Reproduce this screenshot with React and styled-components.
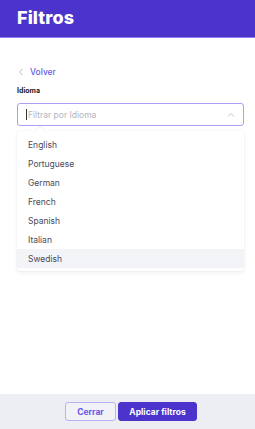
import React from "react";
import styled, { createGlobalStyle } from "styled-components";

const GlobalStyle = createGlobalStyle`
  html, body {
    margin: 0;
    padding: 0;
    font-family: Inter, "Noto Sans", sans-serif;
    background: #ffffff;
  }
  * { box-sizing: border-box; }
`;

const Page = styled.div`
  height: 429px;
  display: flex;
  flex-direction: column;
`;

const Header = styled.header`
  height: 38px;
  flex: 0 0 38px;
  background: #4b33cb;
  border-bottom: 1px solid #8d7ff0;
  display: flex;
  align-items: center;
  padding: 0 17px 2px;
  h1 {
    margin: 0;
    color: #ffffff;
    font-size: 18px;
    font-weight: 800;
    letter-spacing: 0.1px;
  }
`;

const Content = styled.main`
  flex: 1;
  padding: 28px 11px 0 17px;
  display: flex;
  flex-direction: column;
`;

const BackLink = styled.a`
  display: flex;
  align-items: center;
  gap: 6px;
  height: 12px;
  padding-left: 1px;
  color: #6a58e6;
  font-size: 8.5px;
  font-weight: 500;
  text-decoration: none;
`;

const Label = styled.div`
  margin-top: 8px;
  font-size: 7px;
  font-weight: 700;
  color: #1c1c28;
`;

const SelectBox = styled.div`
  position: relative;
  margin-top: 8px;
  height: 23px;
  border: 1px solid #a99ef3;
  border-radius: 3px;
  display: flex;
  align-items: center;
  padding: 0 8px;
  font-size: 8.5px;
  color: #b4b4bf;
  .caret {
    width: 1px;
    height: 11px;
    background: #333;
    margin-right: 1px;
  }
  .text {
    flex: 1;
  }
`;

const Menu = styled.ul`
  position: relative;
  list-style: none;
  margin: 5px 0 0;
  padding: 4px 0 3px;
  background: #ffffff;
  border-radius: 2px;
  box-shadow: 0 0 1px rgba(0, 0, 0, 0.18), 0 2px 4px rgba(0, 0, 0, 0.06);
  &::before {
    content: "";
    position: absolute;
    top: -3px;
    left: 20px;
    width: 6px;
    height: 6px;
    background: #ffffff;
    transform: rotate(45deg);
    box-shadow: -1px -1px 1px rgba(0, 0, 0, 0.05);
  }
`;

const Option = styled.li`
  position: relative;
  height: 19px;
  display: flex;
  align-items: center;
  padding-left: 11px;
  font-size: 8.5px;
  color: #494957;
  background: ${(p) => (p.$active ? "#f3f4f8" : "transparent")};
`;

const Footer = styled.footer`
  flex: 0 0 35px;
  background: #eceef3;
  display: flex;
  justify-content: center;
  align-items: center;
  gap: 2px;
  padding-left: 7px;
`;

const Button = styled.button`
  height: 19px;
  border-radius: 3px;
  font-family: inherit;
  font-size: 8.5px;
  font-weight: 700;
  padding: 0;
  width: ${(p) => (p.$primary ? "79px" : "51px")};
  background: ${(p) => (p.$primary ? "#4b33cb" : "#f1f1f8")};
  color: ${(p) => (p.$primary ? "#ffffff" : "#6a58e6")};
  border: 1px solid ${(p) => (p.$primary ? "#4b33cb" : "#bab2f2")};
`;

const languages = [
  "English",
  "Portuguese",
  "German",
  "French",
  "Spanish",
  "Italian",
  "Swedish",
];

export default function App() {
  return (
    <Page>
      <GlobalStyle />
      <Header>
        <h1>Filtros</h1>
      </Header>
      <Content>
        <BackLink href="#">
          <svg width="6" height="8" viewBox="0 0 6 8">
            <path d="M4.5 1 L1.5 4 L4.5 7" fill="none" stroke="#b9b9c4" strokeWidth="1" />
          </svg>
          Volver
        </BackLink>
        <Label>Idioma</Label>
        <SelectBox>
          <span className="caret" />
          <span className="text">Filtrar por Idioma</span>
          <svg width="8" height="6" viewBox="0 0 8 6">
            <path d="M1 4.5 L4 1.5 L7 4.5" fill="none" stroke="#c4c4cc" strokeWidth="1" />
          </svg>
        </SelectBox>
        <Menu>
          {languages.map((l) => (
            <Option key={l} $active={l === "Swedish"}>
              {l}
            </Option>
          ))}
        </Menu>
      </Content>
      <Footer>
        <Button>Cerrar</Button>
        <Button $primary>Aplicar filtros</Button>
      </Footer>
    </Page>
  );
}
